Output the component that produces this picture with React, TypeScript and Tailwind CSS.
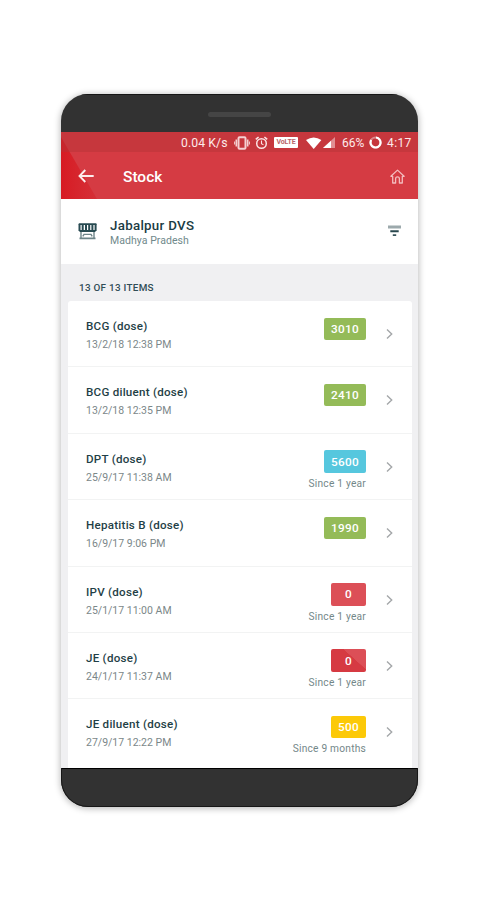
import React from "react";

type Item = { name: string; date: string; qty: string; tone: string; since?: string };

const items: Item[] = [
  { name: "BCG (dose)", date: "13/2/18 12:38 PM", qty: "3010", tone: "bg-[#94bb58] w-[42px]" },
  { name: "BCG diluent (dose)", date: "13/2/18 12:35 PM", qty: "2410", tone: "bg-[#94bb58] w-[42px]" },
  { name: "DPT (dose)", date: "25/9/17 11:38 AM", qty: "5600", tone: "bg-[#56c7de] w-[42px]", since: "Since 1 year" },
  { name: "Hepatitis B (dose)", date: "16/9/17 9:06 PM", qty: "1990", tone: "bg-[#94bb58] w-[42px]" },
  { name: "IPV (dose)", date: "25/1/17 11:00 AM", qty: "0", tone: "bg-[#dc4f57] w-[35px]", since: "Since 1 year" },
  {
    name: "JE (dose)",
    date: "24/1/17 11:37 AM",
    qty: "0",
    tone: "bg-[linear-gradient(42deg,#d63a42_62%,#dc4f57_63%)] w-[35px]",
    since: "Since 1 year",
  },
  { name: "JE diluent (dose)", date: "27/9/17 12:22 PM", qty: "500", tone: "bg-[#fcc908] w-[35px]", since: "Since 9 months" },
];

function StatusBar() {
  return (
    <div className="relative flex h-5 items-center bg-[#b43238]/45 pl-[120px] text-[12px] text-[#fdeaea]">
      <span className="mt-[2px] w-[53px] text-[12.2px] whitespace-nowrap tracking-[0.1px]">0.04 K/s</span>
      <svg className="mt-px h-[14px] w-[16px]" viewBox="0 0 16 14" fill="none" stroke="#f5d0d2">
        <rect x="4.5" y="1.2" width="7" height="11.6" rx="1" strokeWidth="2" />
        <path d="M2.3 3.5v7M13.7 3.5v7" strokeWidth="1.6" />
        <path d="M.6 5.5v3M15.4 5.5v3" strokeWidth="1" />
      </svg>
      <svg className="mt-px ml-[5px] h-[14px] w-[13px]" viewBox="0 0 13 14" fill="none" stroke="#fbe3e4">
        <circle cx="6.5" cy="7.5" r="4.8" strokeWidth="1.5" />
        <path d="M.8 3.4 3.6 1M12.2 3.4 9.4 1" strokeWidth="1.6" />
        <path d="M6.5 4.6v3.1l2 1.2" strokeWidth="1.1" />
      </svg>
      <span className="mt-px ml-[6px] flex h-[11px] w-[24px] items-center justify-center rounded-[1px] bg-white text-[7px] font-bold tracking-[-0.1px] text-[#b9646a]">
        VoLTE
      </span>
      <svg className="mt-px ml-[8px] h-[12px] w-[30px]" viewBox="0 0 30 12">
        <path d="M0 3Q7.7-2 15.4 3L7.7 12Z" fill="#fff" />
        <path d="M29 0v11H17Z" fill="#e18e92" />
        <path d="M25 3.7V11h-8Z" fill="#fff" />
      </svg>
      <span className="mt-[2px] ml-[6px] w-[23px] whitespace-nowrap">66%</span>
      <svg className="mt-px ml-[4px] h-[13px] w-[13px]" viewBox="0 0 13 13" fill="none" strokeWidth="2.2">
        <circle cx="6.5" cy="6.5" r="5" stroke="#dc8589" />
        <path d="M7 1.5A5 5 0 1 1 2.2 4" stroke="#fff" />
      </svg>
      <span className="mt-[2px] ml-[5px] whitespace-nowrap tracking-[0.4px]">4:17</span>
    </div>
  );
}

function Header() {
  return (
    <div className="relative flex h-[47px] items-center pl-[17px] text-white">
      <svg className="mt-px h-[14px] w-[16px]" viewBox="0 0 16 14" fill="none" stroke="#fdecec" strokeWidth="1.9">
        <path d="M15.7 7H1.8M7.3 1 1.5 7l5.8 6" />
      </svg>
      <h1 className="mt-[4px] ml-[29px] text-[15.5px] leading-none font-medium">Stock</h1>
      <svg
        className="mt-px mr-[13px] ml-auto h-[15px] w-[15px]"
        viewBox="0 0 15 15"
        fill="none"
        stroke="#f3bcbe"
        strokeWidth="1.3"
        strokeLinejoin="round"
      >
        <path d="M.9 7.3 7.5 1.1l6.6 6.2h-1.8V14H9.4V9.8a1.9 1.9 0 0 0-3.8 0V14H2.7V7.3Z" />
      </svg>
    </div>
  );
}

function Store() {
  return (
    <div className="flex h-[65px] items-start bg-white pl-[17px]">
      <svg className="mt-[24px] h-[17px] w-[19px]" viewBox="0 0 19 17" fill="none" stroke="#284b52">
        <path d="M.8 1.2h17.6" strokeWidth="1.8" />
        <path d="M1.5 1v7M4.7 1v7.5M8 1v7.5M11.2 1v7.5M14.4 1v7.5M17.6 1v7" strokeWidth="2" />
        <path d="M1.5 8h16" strokeWidth="1.8" />
        <path d="M3 9v6.5M16 9v6.5M4.8 13.4l1.2-2h7l1.2 2" stroke="#6d8488" strokeWidth="1.4" />
        <path d="M1.5 15.3h16" stroke="#6d8488" strokeWidth="1.8" />
      </svg>
      <div className="mt-[19px] ml-[13px] whitespace-nowrap">
        <div className="text-[13.3px] leading-[15px] font-medium tracking-[0.3px] text-[#1b3c44]">Jabalpur DVS</div>
        <div className="mt-px text-[10.5px] leading-[14px] tracking-[0.05px] text-[#70898b]">Madhya Pradesh</div>
      </div>
      <svg className="mt-[26px] mr-[17px] ml-auto h-[12px] w-[13px]" viewBox="0 0 13 12">
        <path d="M0 2h13" stroke="#9ca9ac" strokeWidth="2.8" />
        <path d="M2.3 6.3h8.4" stroke="#28474e" strokeWidth="2" />
        <path d="M4.8 10.2h3.4" stroke="#38555b" strokeWidth="1.8" />
      </svg>
    </div>
  );
}

function Row({ item }: { item: Item }) {
  return (
    <li className="flex h-[66.4px] items-start border-b border-[#f2f3f3] pr-[19px] pl-[18px] last:h-[70px] last:border-0">
      <div className="pt-[18px] whitespace-nowrap">
        <div className="text-[11.6px] leading-[15px] font-medium tracking-[0.25px] text-[#1f3f47]">{item.name}</div>
        <div className="mt-[3px] text-[10.5px] leading-[15px] text-[#7b8789]">{item.date}</div>
      </div>
      <div className="ml-auto flex flex-col items-end pt-[16.5px]">
        <span
          className={`flex h-[22.5px] items-center justify-center rounded-[2px] pt-[2px] text-[11.8px] font-medium tracking-[0.25px] text-white ${item.tone}`}
        >
          {item.qty}
        </span>
        {item.since && (
          <span className="mt-[4px] text-[10.2px] leading-[13px] tracking-[0.22px] whitespace-nowrap text-[#748789]">
            {item.since}
          </span>
        )}
      </div>
      <svg className="mt-[28px] ml-[20px] h-[10px] w-[7px]" viewBox="0 0 7 10" fill="none" stroke="#a4a7a9" strokeWidth="1.4">
        <path d="m1 .6 4.7 4.4L1 9.4" />
      </svg>
    </li>
  );
}

export default function App() {
  return (
    <div className="flex h-[900px] w-[478px] flex-col items-start bg-white pt-[94px] pl-[61px] font-['Roboto',sans-serif]">
      <main className="relative flex h-[713px] w-[357px] flex-col overflow-hidden rounded-[27px] bg-[#323232] shadow-[0_1px_6px_1px_rgba(0,0,0,0.25)]">
        <div className="flex h-[38px] shrink-0 justify-center border-t border-[#171717] pt-[17px]">
          <div className="h-[5px] w-[63px] rounded-full bg-[#454545]" />
        </div>
        <div className="relative bg-[#d53b43]">
          <div
            aria-hidden="true"
            className="absolute top-[5px] left-0 h-[62px] w-[36px] bg-linear-to-r from-[#d71a23] to-[#d52f37] [clip-path:polygon(0_0,100%_100%,0_100%)]"
          />
          <StatusBar />
          <Header />
        </div>
        <Store />
        <section className="flex h-[504px] flex-col overflow-hidden bg-[#f0f0f2] px-[7px]">
          <h2 className="h-[37px] shrink-0 pt-[17px] pl-[11px] text-[9.9px] leading-[14px] font-medium tracking-[0.28px] text-[#314d56]">
            13 OF 13 ITEMS
          </h2>
          <ul className="w-[344px] rounded-t-[3px] bg-white">
            {items.map((item) => (
              <Row key={item.name} item={item} />
            ))}
          </ul>
        </section>
        <div className="h-[39px] shrink-0 border-t border-black bg-[#323232]" />
        <div aria-hidden="true" className="pointer-events-none absolute inset-x-0 bottom-0 h-[39px] rounded-b-[27px] border-x border-b border-[#171717]" />
      </main>
    </div>
  );
}
